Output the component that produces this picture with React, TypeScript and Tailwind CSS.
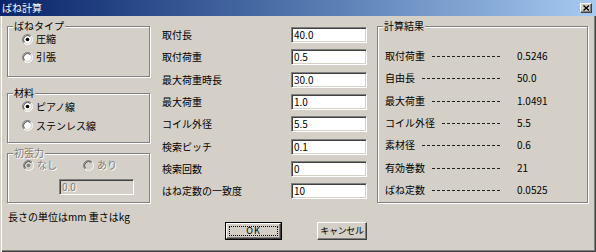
import React from "react";

function Radio({ checked, disabled }: { checked?: boolean; disabled?: boolean }) {
  return (
    <svg width="11" height="11" viewBox="0 0 12 12" className="shrink-0">
      <circle cx="6" cy="6" r="4.5" fill={disabled ? "#d4d0c8" : "#fff"} />
      <path d="M2.11 9.89 A5.5 5.5 0 0 1 9.89 2.11" stroke="#808080" fill="none" />
      <path d="M9.89 2.11 A5.5 5.5 0 0 1 2.11 9.89" stroke="#fff" fill="none" />
      <path d="M2.82 9.18 A4.5 4.5 0 0 1 9.18 2.82" stroke="#404040" fill="none" />
      <path d="M9.18 2.82 A4.5 4.5 0 0 1 2.82 9.18" stroke="#d4d0c8" fill="none" />
      {checked && <circle cx="6" cy="6" r="2" fill={disabled ? "#808080" : "#000"} />}
    </svg>
  );
}

function Group({
  label,
  className,
  children,
  disabled,
}: {
  label: string;
  className: string;
  children?: React.ReactNode;
  disabled?: boolean;
}) {
  return (
    <div className={`relative border border-[#808080] shadow-[inset_1px_1px_0_#fff,1px_1px_0_#fff] ${className}`}>
      <span
        className={`absolute left-[5px] top-[-7px] bg-[#d4d0c8] px-[1px] leading-[11px] whitespace-nowrap ${
          disabled ? "text-[#808080] [text-shadow:1px_1px_0_#fff]" : ""
        }`}
      >
        {label}
      </span>
      {children}
    </div>
  );
}

function TextBox({ value, disabled, className }: { value: string; disabled?: boolean; className: string }) {
  return (
    <div
      className={`flex items-center border border-t-[#808080] border-l-[#808080] border-b-white border-r-white shadow-[inset_1px_1px_0_#404040,inset_-1px_-1px_0_#d4d0c8] pl-[2px] ${
        disabled ? "bg-[#d4d0c8] text-[#808080] [text-shadow:1px_1px_0_#fff]" : "bg-white"
      } ${className}`}
    >
      {value}
    </div>
  );
}

const inputs: [string, string][] = [
  ["取付長", "40.0"],
  ["取付荷重", "0.5"],
  ["最大荷重時長", "30.0"],
  ["最大荷重", "1.0"],
  ["コイル外径", "5.5"],
  ["検索ピッチ", "0.1"],
  ["検索回数", "0"],
  ["はね定数の一致度", "10"],
];

const results: [string, string][] = [
  ["取付荷重", "0.5246"],
  ["自由長", "50.0"],
  ["最大荷重", "1.0491"],
  ["コイル外径", "5.5"],
  ["素材径", "0.6"],
  ["有効巻数", "21"],
  ["ばね定数", "0.0525"],
];

export default function App() {
  return (
    <div className="w-[596px] h-[252px] bg-[#d4d0c8] flex flex-col overflow-hidden shadow-[inset_1px_0_0_#d4d0c8,inset_2px_0_0_#fff,inset_-1px_-1px_0_#404040,inset_-2px_-2px_0_#808080] font-['Noto_Sans_CJK_JP',sans-serif] text-[10px] leading-[12px] text-black">
      {/* title bar */}
      <div className="h-[16px] shrink-0 flex items-center bg-gradient-to-r from-[#0a246a] to-[#a6caf0]">
        <span className="pl-[2px] text-white text-[10px] leading-[12px]">ばね計算</span>
        <div className="ml-auto mr-[4px] w-[12px] h-[10px] bg-[#d4d0c8] border border-t-white border-l-white border-b-[#404040] border-r-[#404040] shadow-[inset_-1px_-1px_0_#808080] flex items-center justify-center">
          <svg width="7" height="6" viewBox="0 0 7 6">
            <path d="M0.5 0.5 L6 5.5 M6 0.5 L0.5 5.5" stroke="#000" strokeWidth="1.4" />
          </svg>
        </div>
      </div>

      <div className="flex items-start">
        {/* column 1 */}
        <div className="ml-[7px] mt-[10px] w-[144px] flex flex-col">
          <Group label="ばねタイプ" className="w-[143px] h-[51px] pt-[3px] pl-[14px]">
            <div className="h-[18px] flex items-center gap-[3px]">
              <Radio checked />
              <span>圧縮</span>
            </div>
            <div className="h-[18px] flex items-center gap-[3px]">
              <Radio />
              <span>引張</span>
            </div>
          </Group>
          <Group label="材料" className="mt-[16px] w-[143px] h-[50px] pt-[3px] pl-[14px]">
            <div className="h-[19px] flex items-center gap-[3px]">
              <Radio checked />
              <span>ピアノ線</span>
            </div>
            <div className="h-[19px] flex items-center gap-[3px]">
              <Radio />
              <span>ステンレス線</span>
            </div>
          </Group>
          <Group label="初張力" disabled className="mt-[10px] w-[143px] h-[50px] pt-[2px] pl-[15px]">
            <div className="h-[18px] flex items-center text-[#808080] [text-shadow:1px_1px_0_#fff]">
              <div className="w-[60px] flex items-center gap-[3px]">
                <Radio checked disabled />
                <span>なし</span>
              </div>
              <div className="flex items-center gap-[3px]">
                <Radio disabled />
                <span>あり</span>
              </div>
            </div>
            <TextBox value="0.0" disabled className="mt-[5px] ml-[36px] w-[75px] h-[16px]" />
          </Group>
          <div className="mt-[8px] ml-[1px] whitespace-nowrap">長さの単位はmm 重さはkg</div>
        </div>

        {/* column 2 */}
        <div className="ml-[11px] mt-[8px] flex flex-col">
          {inputs.map(([label, value]) => (
            <div key={label} className="h-[22.3px] flex items-center">
              <span className="w-[129px] whitespace-nowrap">{label}</span>
              <TextBox value={value} className="w-[76px] h-[16px]" />
            </div>
          ))}
          <div className="mt-[20px] ml-[63px] flex gap-[35px]">
            <div className="relative w-[57px] h-[18px] border border-black">
              <div className="h-full w-full border border-t-white border-l-white border-b-[#404040] border-r-[#404040] shadow-[inset_-1px_-1px_0_#808080] flex items-center justify-center">
                <span className="tracking-[1px] text-[9px]">OK</span>
              </div>
              <div className="absolute inset-[3px] border border-dotted border-black" />
            </div>
            <div className="w-[50px] h-[18px] border border-t-white border-l-white border-b-[#404040] border-r-[#404040] shadow-[inset_-1px_-1px_0_#808080] flex items-center justify-center">
              <span className="whitespace-nowrap text-[9px] tracking-[-0.3px]">キャンセル</span>
            </div>
          </div>
        </div>

        {/* column 3 */}
        <div className="ml-[10px] mt-[10px]">
          <Group label="計算結果" className="w-[211px] h-[177px] pt-[18px] pl-[7px]">
            {results.map(([label, value]) => (
              <div key={label} className="h-[22.3px] flex items-center">
                <div className="w-[115px] flex items-center">
                  <span className="whitespace-nowrap">{label}</span>
                  <div className="ml-[6px] mt-[1px] min-w-0 flex-1 h-[1px] bg-[repeating-linear-gradient(to_left,#202020_0_3px,transparent_3px_5px)]" />
                </div>
                <span className="ml-[17px]">{value}</span>
              </div>
            ))}
          </Group>
        </div>
      </div>
    </div>
  );
}
